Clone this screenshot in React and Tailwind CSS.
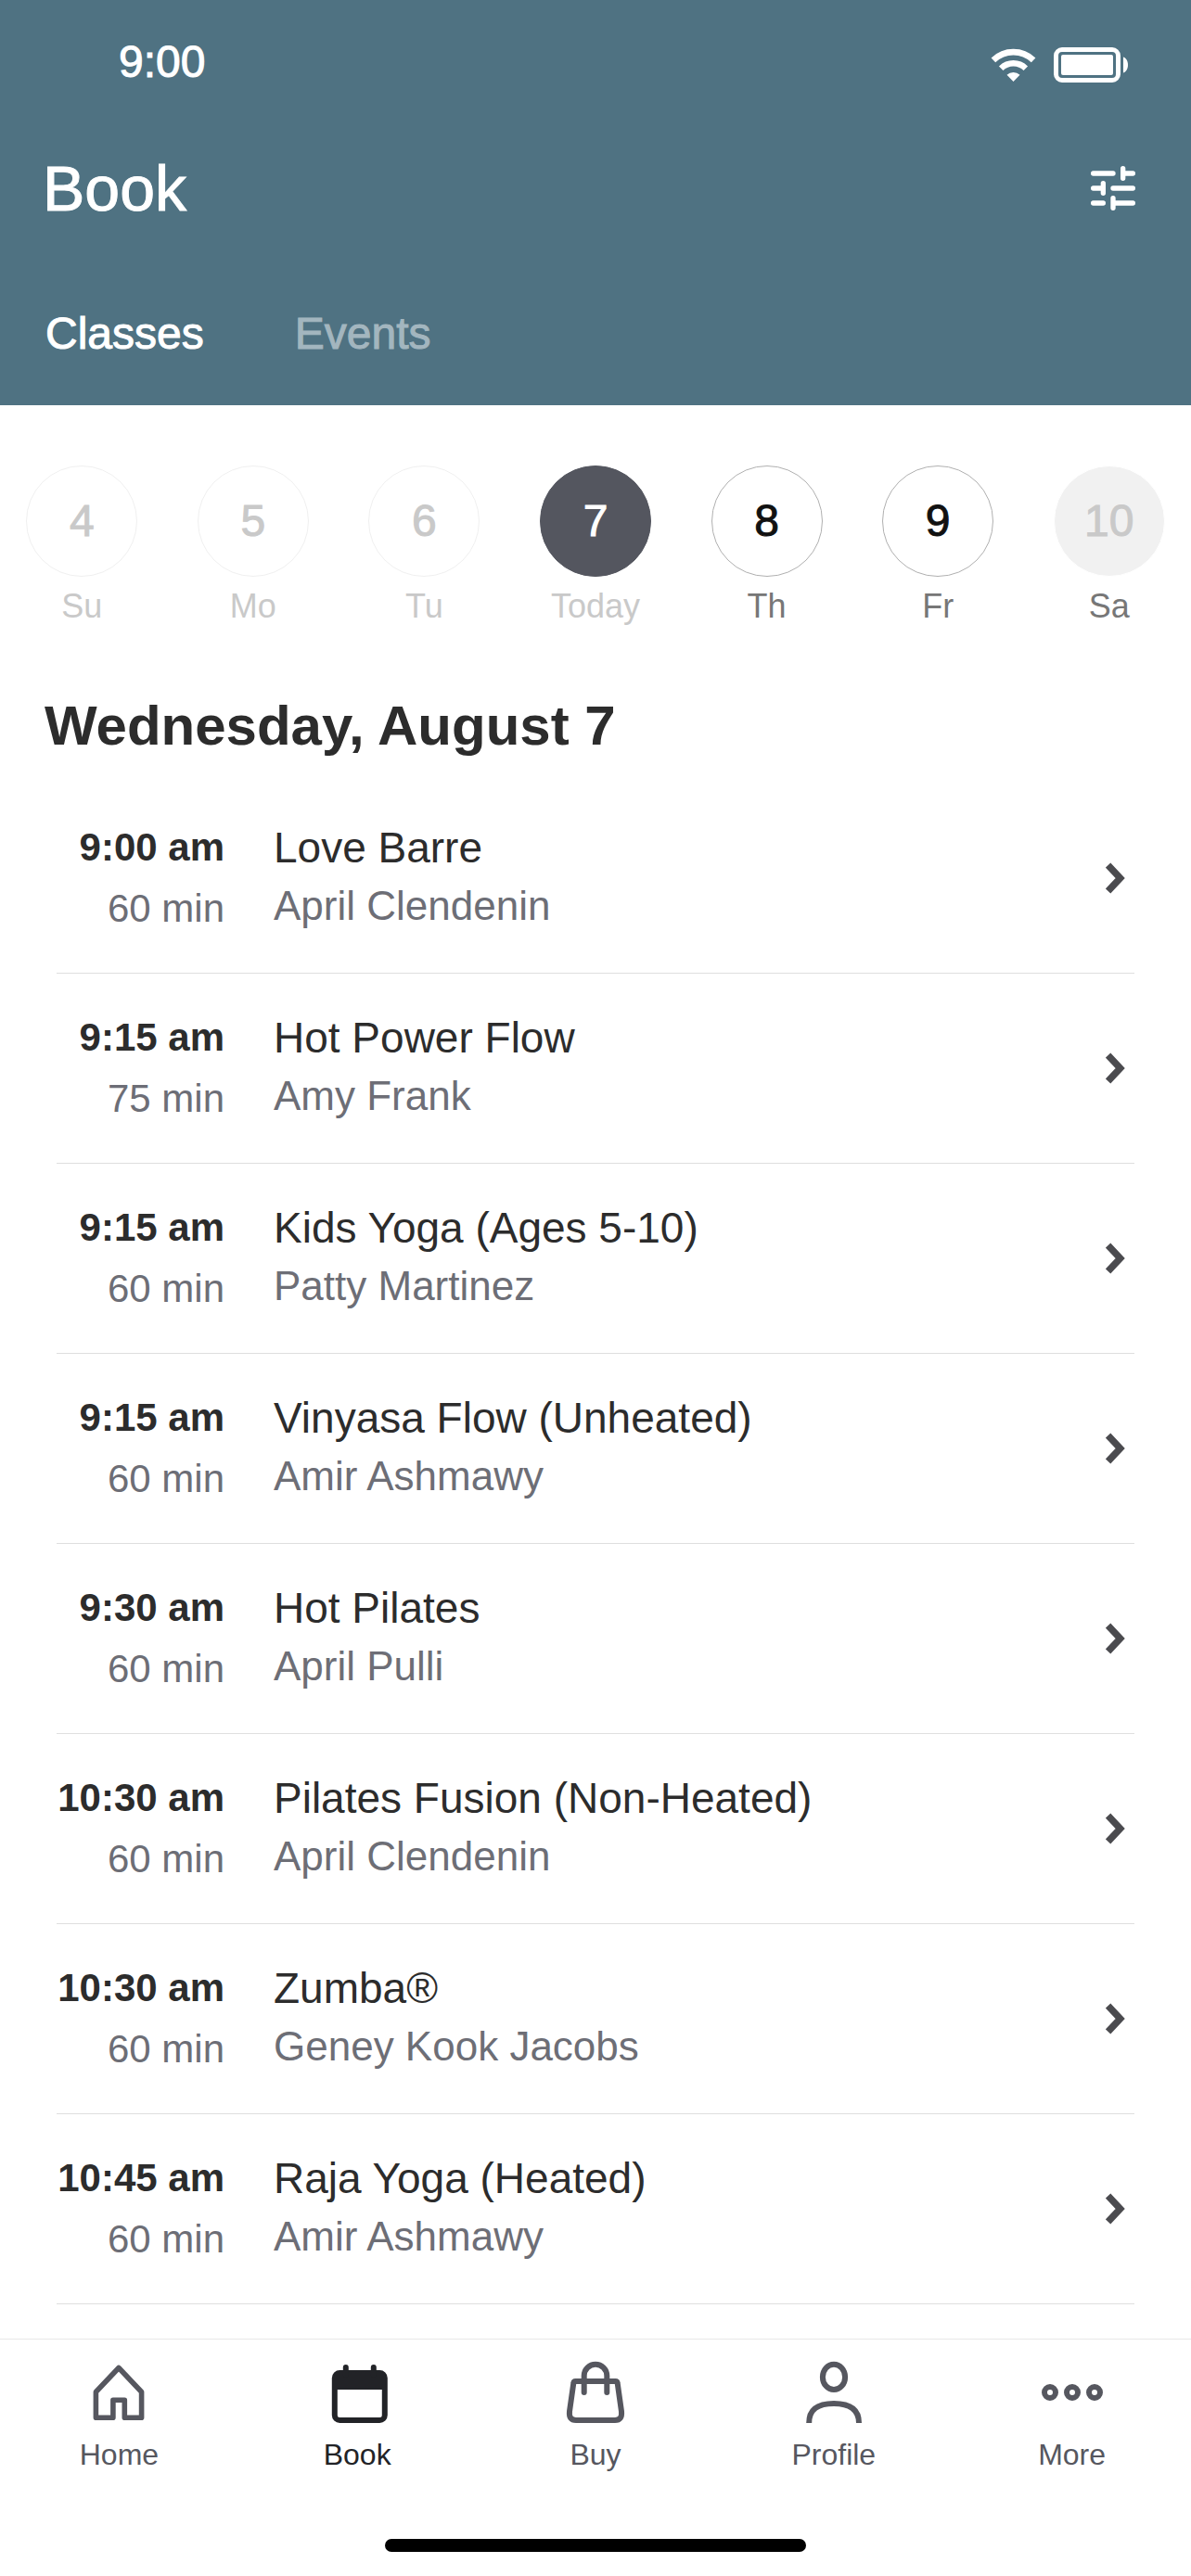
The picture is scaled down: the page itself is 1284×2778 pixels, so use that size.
import { useState } from "react";
import clsx from "clsx";

const days = [
  { date: 4, label: "Su", status: "past" },
  { date: 5, label: "Mo", status: "past" },
  { date: 6, label: "Tu", status: "past" },
  { date: 7, label: "Today", status: "selected" },
  { date: 8, label: "Th", status: "open" },
  { date: 9, label: "Fr", status: "open" },
  { date: 10, label: "Sa", status: "closed" },
];

const classes = [
  { time: "9:00 am", length: "60 min", name: "Love Barre", teacher: "April Clendenin" },
  { time: "9:15 am", length: "75 min", name: "Hot Power Flow", teacher: "Amy Frank" },
  { time: "9:15 am", length: "60 min", name: "Kids Yoga (Ages 5-10)", teacher: "Patty Martinez" },
  { time: "9:15 am", length: "60 min", name: "Vinyasa Flow (Unheated)", teacher: "Amir Ashmawy" },
  { time: "9:30 am", length: "60 min", name: "Hot Pilates", teacher: "April Pulli" },
  { time: "10:30 am", length: "60 min", name: "Pilates Fusion (Non-Heated)", teacher: "April Clendenin" },
  { time: "10:30 am", length: "60 min", name: "Zumba®", teacher: "Geney Kook Jacobs" },
  { time: "10:45 am", length: "60 min", name: "Raja Yoga (Heated)", teacher: "Amir Ashmawy" },
];

const circleStyles = {
  past: "border-[#f0f0f0] text-[#c9c9c9]",
  selected: "border-[#54565f] bg-[#54565f] text-white",
  open: "border-[#b0b0b0] text-[#111111]",
  closed: "border-white bg-[#f1f1f1] text-[#c9c9c9]",
};

function WifiIcon() {
  return (
    <svg width="49" height="38" viewBox="0 0 49 38" fill="none" stroke="currentColor">
      <path d="M2.900 13.900a31 31 0 0 1 43.200 0" strokeWidth="6.600" />
      <path d="M11.200 22.700a19 19 0 0 1 26.600 0" strokeWidth="6.400" />
      <path d="M24.500 37l-7-7.200a10.200 10.200 0 0 1 14 0z" fill="currentColor" stroke="none" />
    </svg>
  );
}

function BatteryIcon() {
  return (
    <svg width="80" height="38" viewBox="0 0 80 38" fill="none">
      <rect x="2.5" y="2.5" width="67" height="33" rx="6.5" stroke="currentColor" strokeWidth="5" />
      <rect x="8" y="8" width="56" height="22" rx="2" fill="currentColor" />
      <path d="M75 10.5c3.400 1 5 4.800 5 8.500s-1.600 7.500-5 8.500z" fill="currentColor" />
    </svg>
  );
}

function FilterIcon() {
  return (
    <svg
      className="size-12"
      viewBox="3 3 18 18"
      fill="none"
      stroke="currentColor"
      strokeWidth="2"
      strokeLinecap="round"
    >
      <path d="M4 6h8M16 6h4M16 4v4M4 12h4M8 10v4M12 12h8M4 18h4M12 18h8M12 16v4" />
    </svg>
  );
}

function Chevron() {
  return (
    <svg width="21" height="34" viewBox="0 0 21 34" fill="none" stroke="#4b4b4f" strokeWidth="7.400">
      <path d="M2.600 3L15.700 17L2.600 31" />
    </svg>
  );
}

function TabIcon({ children }) {
  return (
    <svg
      className="size-[72px]"
      viewBox="0 0 72 72"
      fill="none"
      stroke="currentColor"
      strokeWidth="6"
      strokeLinejoin="round"
    >
      {children}
    </svg>
  );
}

const tabs = [
  {
    name: "Home",
    icon: <path d="M36 9.500L60.600 35.500V63.300H42.300V44.200H29.900V63.300H11.400V35.500z" strokeWidth="5.600" />,
  },
  {
    name: "Book",
    icon: (
      <>
        <rect x="11.8" y="15" width="54" height="51" rx="5.500" />
        <path d="M11 33V19q0-5 5-5h46q5 0 5 5v14z" fill="currentColor" stroke="none" />
        <path d="M23.800 9v8M53.800 9v8" strokeLinecap="round" />
      </>
    ),
  },
  {
    name: "Buy",
    icon: (
      <>
        <path d="M14.500 24h43q2 0 2.200 2.200L64 56.500Q65 66 57 66H15Q7 66 8 56.500L12.300 26.200Q12.500 24 14.500 24z" />
        <path d="M23.700 36V18a12.300 12.300 0 0 1 24.600 0v18" strokeLinecap="round" />
      </>
    ),
  },
  {
    name: "Profile",
    icon: (
      <>
        <ellipse cx="36" cy="19.400" rx="12.100" ry="13.700" />
        <path d="M9.200 69C9.200 54 19 48 36 48S63 54 63 69" />
      </>
    ),
  },
  {
    name: "More",
    icon: (
      <>
        <circle cx="12" cy="36" r="6" />
        <circle cx="36" cy="36" r="6" />
        <circle cx="60" cy="36" r="6" />
      </>
    ),
  },
];

export default function App() {
  const [view, setView] = useState("Classes");
  const [activeTab, setActiveTab] = useState("Book");

  return (
    <div className="flex min-h-screen flex-col bg-white font-['Liberation_Sans',sans-serif] text-[#2c2c2c]">
      <header className="bg-[#4f7282] text-white [-webkit-text-stroke:1px]">
        {/* Status bar */}
        <div className="flex h-[123px] items-start justify-between pt-[51px] pr-[68px] pl-32">
          <span className="text-[48px] leading-8">9:00</span>
          <div className="flex gap-[19px]">
            <WifiIcon />
            <BatteryIcon />
          </div>
        </div>

        <div className="flex h-40 items-center justify-between pr-15 pl-[46px]">
          <h1 className="text-[68px] leading-none">Book</h1>
          <button aria-label="Filter">
            <FilterIcon />
          </button>
        </div>

        <div className="flex h-[154px] items-center gap-[98px] px-[49px]">
          {["Classes", "Events"].map((item) => (
            <button
              key={item}
              onClick={() => setView(item)}
              className={clsx("text-[48px] leading-none", view !== item && "text-[#a3b6bf]")}
            >
              {item}
            </button>
          ))}
        </div>
      </header>

      <main className="flex-1 pb-[37px]">
        {/* Week strip */}
        <div className="overflow-hidden pt-[65px]">
          <div className="-mx-1 grid grid-cols-7">
            {days.map((day) => (
              <button key={day.date} className="flex flex-col items-center gap-2">
                <span
                  className={clsx(
                    "flex size-[120px] items-center justify-center rounded-full border text-[48px] leading-none [-webkit-text-stroke:1px]",
                    circleStyles[day.status]
                  )}
                >
                  {day.date}
                </span>
                <span
                  className={clsx(
                    "text-[36px] leading-12",
                    day.status === "open" || day.status === "closed"
                      ? "text-[#777777]"
                      : "text-[#c9c9c9]"
                  )}
                >
                  {day.label}
                </span>
              </button>
            ))}
          </div>
        </div>

        <h2 className="mt-[75px] mb-8 px-12 text-[60px] leading-none font-bold">
          Wednesday, August 7
        </h2>

        {/* Class list */}
        <ul className="px-[61px]">
          {classes.map((item) => (
            <li key={item.time + item.name} className="border-b border-[#dfdfdf]">
              <a href="#" className="flex items-start pt-9 pr-[10px] pb-9">
                <div className="w-[181px] shrink-0 text-right text-[42px] leading-[66px] whitespace-nowrap">
                  <p className="font-bold">{item.time}</p>
                  <p className="text-[#6d6e76]">{item.length}</p>
                </div>
                <div className="ml-[53px] flex-1">
                  <p className="text-[46px] leading-[66px]">{item.name}</p>
                  <p className="text-[44px] leading-[60px] text-[#6d6e76]">{item.teacher}</p>
                </div>
                <span className="self-center">
                  <Chevron />
                </span>
              </a>
            </li>
          ))}
        </ul>
      </main>

      <nav className="border-t border-[#e8e8e8] pt-[21px] pb-[26px]">
        <div className="grid grid-cols-5">
          {tabs.map((tab) => (
            <button
              key={tab.name}
              onClick={() => setActiveTab(tab.name)}
              className={clsx(
                "flex flex-col items-center gap-[11px]",
                activeTab === tab.name ? "text-[#222327]" : "text-[#56575f]"
              )}
            >
              <TabIcon>{tab.icon}</TabIcon>
              <span className="text-[32px] leading-10">{tab.name}</span>
            </button>
          ))}
        </div>
        <div className="mx-auto mt-[71px] h-[14px] w-[454px] rounded-full bg-black" />
      </nav>
    </div>
  );
}
